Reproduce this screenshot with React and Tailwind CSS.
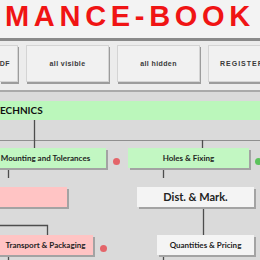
import React from 'react';

const lato = { fontFamily: 'Lato, "Open Sans", sans-serif' };

const ToolButton = ({ children, className = '' }) => (
  <div
    className={`h-[37px] shrink-0 flex items-center pt-[2px] bg-[#f1f1f1] border border-[#d4d4d4] shadow-[1px_2px_0_#9c9c9c] text-[7px] font-bold text-[#3a3a3a] tracking-[0.4px] ${className}`}
    style={{ fontFamily: '"Liberation Sans", Arial, sans-serif' }}
  >
    {children}
  </div>
);

const Node = ({ children, className = '' }) => (
  <div
    className={`h-[20px] shrink-0 flex items-center justify-center font-bold text-[8px] text-[#1e1e1e] shadow-[2px_2px_0_#a3a3a3] ${className}`}
    style={lato}
  >
    {children}
  </div>
);

const Dot = ({ color, className = '' }) => (
  <div className={`w-[7px] h-[7px] rounded-full shrink-0 self-end ${color} ${className}`} />
);

const Connectors = () => (
  <svg className="absolute inset-0 pointer-events-none" width="260" height="168" viewBox="0 92 260 168">
    <g stroke="#8f8f8f" strokeWidth="1.2">
      <line x1="0" y1="140.5" x2="260" y2="140.5" />
    </g>
    <g stroke="#4d4d4d" strokeWidth="1.3" fill="none">
      <line x1="34.5" y1="120" x2="34.5" y2="148" />
      <line x1="202.5" y1="140" x2="202.5" y2="148" />
      <line x1="8.5" y1="168" x2="8.5" y2="178" />
      <line x1="163.5" y1="168" x2="163.5" y2="178" />
      <line x1="203.5" y1="206" x2="203.5" y2="235" />
      <polyline points="0,225.5 47.5,225.5 47.5,235" />
      <line x1="8.5" y1="254" x2="8.5" y2="260" />
      <line x1="163.5" y1="253" x2="163.5" y2="260" />
    </g>
  </svg>
);

export default function App() {
  return (
    <div className="w-[260px] h-[260px] overflow-hidden bg-[#dadada] flex flex-col">
      {/* Title */}
      <div className="h-[41px] shrink-0 bg-[#f3f3f3] flex items-start pl-[5px] border-b-[3px] border-[#8a8a8a]">
        <span
          className="text-[29px] leading-[32px] font-bold text-[#f01414] tracking-[4.7px] whitespace-nowrap"
          style={{ fontFamily: '"Liberation Sans", Arial, sans-serif' }}
        >
          MANCE-BOOK
        </span>
      </div>

      {/* Toolbar */}
      <div className="h-[51px] shrink-0 bg-[#ececec] border-b-2 border-[#a9a9a9] flex items-start pt-[4px] gap-[8px]">
        <ToolButton className="w-[18px] border-l-0 justify-end pr-[7px]">PDF</ToolButton>
        <ToolButton className="w-[83px] justify-center">all visible</ToolButton>
        <ToolButton className="w-[83px] justify-center">all hidden</ToolButton>
        <ToolButton className="w-[83px] pl-[11px] tracking-[1px] whitespace-nowrap">REGISTER INDEX</ToolButton>
      </div>

      {/* Tree */}
      <div className="relative flex-1 flex flex-col">
        <Connectors />
        <div
          className="relative mt-[9px] h-[19px] bg-[#bbf7bb] flex items-center font-bold text-[10px] text-[#111] whitespace-nowrap"
          style={lato}
        >
          <span className="ml-[-6px]">TECHNICS</span>
        </div>

        <div className="relative mt-[28px] flex items-center">
          <Node className="w-[121px] ml-[-15px] bg-[#c2f7c2]">Mounting and Tolerances</Node>
          <Dot color="bg-[#e4656a]" className="ml-[7px] mb-[3px]" />
          <Node className="w-[121px] ml-[8px] bg-[#c2f7c2]">Holes &amp; Fixing</Node>
          <Dot color="bg-[#5cc25c]" className="ml-[6px] mb-[3px]" />
        </div>

        <div className="relative mt-[19px] flex items-center">
          <Node className="w-[121px] ml-[-54px] bg-[#ffc4c4]"></Node>
          <Node className="w-[117px] ml-[70px] bg-[#f4f4f4] text-[11px] text-[#222]">Dist. &amp; Mark.</Node>
        </div>

        <div className="relative mt-[28px] flex items-center">
          <Node className="w-[95px] ml-[-2px] bg-[#ffc4c4]">Transport &amp; Packaging</Node>
          <Dot color="bg-[#e4656a]" className="ml-[7px] mb-[3px]" />
          <Node className="w-[97px] ml-[50px] bg-[#f4f4f4]">Quantities &amp; Pricing</Node>
          <Dot color="bg-[#e4656a]" className="ml-[7px] mb-[3px]" />
        </div>
      </div>
    </div>
  );
}
